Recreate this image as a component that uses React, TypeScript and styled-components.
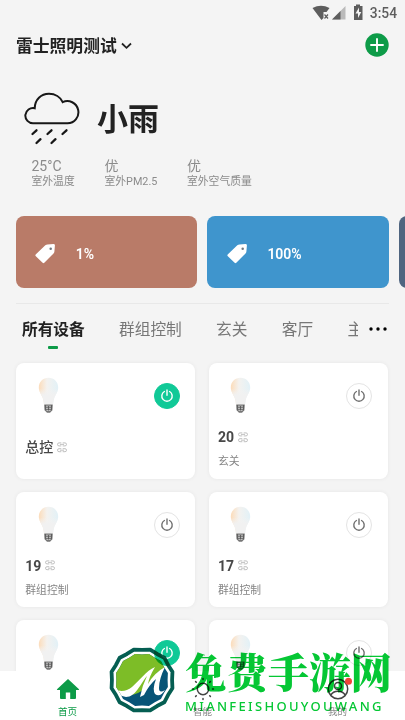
import React from "react";
import styled, { createGlobalStyle } from "styled-components";

const Global = createGlobalStyle`
  * { box-sizing: border-box; }
  body { margin: 0; background: #f4f4f4; }
`;

const Screen = styled.div`
  position: relative;
  width: 405px;
  height: 720px;
  overflow: hidden;
  display: flex;
  flex-direction: column;
  background: #f4f4f4;
  color: #222;
  font-family: Roboto, "Noto Sans CJK SC", sans-serif;
`;

const StatusBar = styled.div`
  height: 24px;
  flex: none;
  display: flex;
  justify-content: flex-end;
  align-items: center;
  padding: 1px 8px 0 0;
  color: #5d5d5d;
  font-size: 13.8px;
  font-weight: 500;
  line-height: 24px;
`;
const StatusIcons = styled.svg`
  width: 52px;
  height: 18px;
  margin: -2px 6px 0 0;
`;

const Header = styled.header`
  height: 42px;
  flex: none;
  display: flex;
  align-items: center;
  justify-content: space-between;
  padding: 0 16px;
`;
const HomeName = styled.div`
  display: flex;
  align-items: center;
  gap: 4px;
  padding-top: 1px;
  font-size: 16.8px;
  font-weight: 700;
  line-height: 24px;
`;

const Weather = styled.section`
  height: 93px;
  flex: none;
  display: flex;
  padding: 25px 0 0 24px;
`;
const WeatherName = styled.div`
  font-size: 31px;
  font-weight: 700;
  line-height: 36px;
  margin: 11px 0 0 17px;
`;

const Readings = styled.section`
  height: 57px;
  flex: none;
  display: flex;
  padding-left: 31.5px;
`;
const Reading = styled.div<{ $w: number }>`
  width: ${(p) => p.$w}px;
  color: #8b8b8b;
  font-size: 10.8px;
  line-height: 16px;
  white-space: nowrap;
`;
const ReadingValue = styled.div`
  font-size: 14px;
  line-height: 15px;
`;

const Scenes = styled.section`
  height: 72px;
  flex: none;
  display: flex;
  gap: 10px;
  padding-left: 15.7px;
  overflow: hidden;
`;
const Scene = styled.div<{ $color: string }>`
  width: 181.7px;
  flex: none;
  display: flex;
  align-items: center;
  gap: 19.5px;
  padding: 4px 0 0 19.5px;
  border-radius: 8px;
  background: ${(p) => p.$color};
  color: #fff;
  font-size: 14px;
  font-weight: 600;
`;

const Divider = styled.div`
  height: 1px;
  flex: none;
  margin: 15px 16px 0;
  background: #e8e8e8;
`;

const TabBar = styled.nav`
  height: 59px;
  flex: none;
  display: flex;
  padding: 13px 18px 0 22px;
`;
const Tabs = styled.div`
  display: flex;
  width: 336px;
  overflow: hidden;
`;
const Tab = styled.div<{ $active?: boolean }>`
  flex: none;
  display: flex;
  flex-direction: column;
  align-items: center;
  margin-right: 34.3px;
  height: 36px;
  font-size: 15.7px;
  line-height: 25px;
  font-weight: ${(p) => (p.$active ? 700 : 400)};
  color: ${(p) => (p.$active ? "#222" : "#777")};
  &::after {
    content: "";
    width: 10px;
    height: 3px;
    margin-top: 4px;
    border-radius: 1px;
    background: ${(p) => (p.$active ? "#0d9b48" : "transparent")};
  }
`;
const Dots = styled.svg`
  width: 18px;
  height: 4px;
  margin: 10px 0 0 10.5px;
`;

const Devices = styled.section`
  display: grid;
  grid-template-columns: 179px 179px;
  grid-auto-rows: 115.6px;
  gap: 13px 13.7px;
  padding-left: 16.3px;
`;
const Card = styled.article`
  display: flex;
  flex-direction: column;
  padding: 14px 15.6px 0 9px;
  border-radius: 8px;
  background: #fff;
  box-shadow: 0 0 4px rgba(0, 0, 0, 0.06);
`;
const CardTop = styled.div`
  display: flex;
  justify-content: space-between;
  align-items: flex-start;
  height: 50px;
  padding-left: 11.5px;
`;
const Power = styled.div<{ $on?: boolean }>`
  width: 26px;
  height: 26px;
  margin-top: 6px;
  display: grid;
  place-items: center;
  border-radius: 50%;
  color: ${(p) => (p.$on ? "#fff" : "#707070")};
  background: ${(p) => (p.$on ? "#10c997" : "#fff")};
  border: 1px solid ${(p) => (p.$on ? "#10c997" : "#e4e4e4")};
`;
const DeviceName = styled.div<{ $single?: boolean }>`
  display: flex;
  align-items: center;
  gap: 4px;
  margin-top: ${(p) => (p.$single ? 10 : 0)}px;
  color: #484848;
  font-size: 14px;
  font-weight: ${(p) => (p.$single ? 500 : 700)};
  line-height: 20px;
`;
const Room = styled.div`
  margin-top: 6px;
  color: #858585;
  font-size: 10.8px;
  line-height: 18px;
`;

const BottomNav = styled.nav`
  position: absolute;
  left: 0;
  right: 0;
  bottom: 0;
  height: 49px;
  display: grid;
  grid-template-columns: repeat(3, 1fr);
  background: #fff;
`;
const NavItem = styled.div<{ $active?: boolean }>`
  display: flex;
  flex-direction: column;
  align-items: center;
  padding-top: 6px;
  color: ${(p) => (p.$active ? "#0d9b48" : "#888")};
  font-size: 9.6px;
  line-height: 14px;
  svg { margin-bottom: 4px; }
`;

const Watermark = styled.div`
  position: absolute;
  left: 108px;
  bottom: 5px;
  display: flex;
  align-items: flex-start;
  gap: 9px;
  mix-blend-mode: multiply;
`;
const SiteText = styled.div`
  width: 210px;
  color: #05c734;
  white-space: nowrap;
`;
const SiteName = styled.div`
  font-family: "Noto Serif CJK SC", "Noto Sans CJK SC", serif;
  font-size: 41.4px;
  font-weight: 900;
  line-height: 46px;
`;
const SitePinyin = styled.div`
  font-family: "Noto Sans", sans-serif;
  font-size: 13px;
  font-weight: 500;
  line-height: 14px;
  letter-spacing: 2.3px;
  margin-top: 6px;
`;

const CloudIcon = () => (
  <svg width="56" height="54" viewBox="24 91 56 54" fill="none" stroke="#171717" strokeWidth="2" strokeLinecap="round">
    <path d="M33.300 123.300A7.650 7.650 0 1 1 34.700 108.200C34.900 99.500 41 93.700 49 93.700c6 0 11.500 3.300 13.700 8.400A11.100 11.100 0 1 1 67.500 123.300Z" />
    <path d="m36.500 130.300-4 3.700M51.500 130.300l-4 3.700M66.500 130.300l-4 3.700M40.500 139.200l-4 3.800M55.500 139.200l-4 3.800" strokeWidth="2.300" />
  </svg>
);

const TagIcon = () => (
  <svg width="21" height="20" viewBox="0 0 21 20">
    <path d="M.7 10.500 10.300 1.300Q11.300.6 12.500.4L18.500 0Q20 0 19.900 1.400L19.400 7.500Q19.300 8.800 18.300 9.700L9.300 18.800Q8.500 19.500 7.600 18.700L.6 12Q0 11.300.7 10.500Z" fill="#fff" />
    <circle cx="15.700" cy="4.700" r="1.250" fill="#6f7880" />
  </svg>
);

const bulbShape =
  "M11.500 .8C6 .8 1.800 5 1.800 10.500c0 4.300 2.700 6.800 4 10.600 .7 2.100 .9 4.300 1.200 6.400h9c.3-2.100 .5-4.300 1.200-6.400 1.300-3.800 4-6.300 4-10.600C21.200 5 17 .8 11.500 .8Z";

const BulbIcon = ({ id }: { id: string }) => (
  <svg width="23" height="38" viewBox="0 0 23 38">
    <defs>
      <linearGradient id={id}>
        <stop offset="0" stopColor="#fcdcba" />
        <stop offset=".42" stopColor="#f4f2ef" />
        <stop offset="1" stopColor="#e2f1f7" />
      </linearGradient>
      <linearGradient id={id + "n"} x2="0" y2="1">
        <stop offset=".4" stopColor="#f3f3f3" stopOpacity="0" />
        <stop offset=".65" stopColor="#f1f1f1" />
      </linearGradient>
    </defs>
    <path d={bulbShape} fill={`url(#${id})`} />
    <path d={bulbShape} fill={`url(#${id}n)`} />
    <path d="M7.300 27.500h8.400l-.5 6-2.200 2.200h-3L7.800 33.500Z" fill="#777" />
    <path d="M9 29.200h5M9 31.400h5M9.500 33.500h4" stroke="#dedede" strokeWidth=".7" />
    <path d="M8.200 28v5M11.500 29v4.500M14.700 28v5" stroke="#505050" strokeWidth=".8" />
  </svg>
);

const PowerIcon = () => (
  <svg width="14" height="14" viewBox="0 0 14 14" fill="none" stroke="currentColor" strokeWidth="1.400" strokeLinecap="round">
    <path d="M7 1v5.200M4.400 2.500a5.200 5.200 0 1 0 5.200 0" />
  </svg>
);

const LinkIcon = () => (
  <svg width="10" height="11" viewBox="0 0 10 11" fill="none" stroke="#bababa" strokeWidth=".9">
    {[2.4, 8.2].map((y) => (
      <g key={y}>
        <path d={`M4.300 ${y - 1.5}H2A1.500 1.500 0 0 0 2 ${y + 1.5}H4.300M5.700 ${y - 1.5}H8A1.500 1.500 0 0 1 8 ${y + 1.5}H5.700`} />
        <path d={`M3 ${y}h4`} />
      </g>
    ))}
  </svg>
);

const outline = (r: number) =>
  Array.from({ length: 12 }, (_, i) => {
    const a = ((i * 30 + 15) * Math.PI) / 180;
    const b = ((i * 30 + 30) * Math.PI) / 180;
    const p = `${34 + r * Math.cos(a)} ${33 + r * Math.sin(a)}`;
    const q = `${34 + r * 0.955 * Math.cos(b)} ${33 + r * 0.955 * Math.sin(b)}`;
    return `${i ? "L" : "M"}${p}L${q}`;
  }).join("") + "Z";

const SiteLogo = () => (
  <svg width="68" height="68" viewBox="0 0 68 68">
    <defs>
      <clipPath id="emblem"><path d={outline(26.8)} /></clipPath>
    </defs>
    <path d={outline(31.5)} fill="#fff" stroke="#055e52" strokeWidth="3.800" strokeLinejoin="round" />
    <g clipPath="url(#emblem)">
      <path d="M0 0h68v68H0Z" fill="#075477" />
      <path d="M0 0H68L62 12Q57 23 50 25L38 40Q29 49 20 48Q12 48 0 41Z" fill="#7dbd27" />
      <path d="M5 41C10 45 18 45 24 40C32 33 38 24 47 20Q41 30 40 37Q46 26 57 20Q51 32 51 41Q51 47 57 43Q52 51 47 47Q44 42 48 32Q41 38 36 48L32 50Q34 39 39 29C32 37 28 50 18 50Q9 49 5 41Z" fill="#fff" />
    </g>
  </svg>
);

const devices = [
  { name: "总控", on: true },
  { name: "20", room: "玄关" },
  { name: "19", room: "群组控制" },
  { name: "17", room: "群组控制" },
  { name: "16", room: "群组控制", on: true },
  { name: "15", room: "群组控制" },
];

export default function App() {
  return (
    <Screen>
      <Global />
      <StatusBar>
        <StatusIcons viewBox="0 0 52 18">
          <path d="M.5 5Q9 .5 17.500 5l-3 4h-3v6l-2 2Z" fill="#5d5d5d" />
          <path d="m12.500 11.500 3.500 4m0-4-3.500 4" stroke="#5d5d5d" strokeWidth="1.200" />
          <path d="M20 16.500 33.500 3v13.500Z" fill="#bababa" />
          <path d="M20 16.500 28.500 8v8.500Z" fill="#5d5d5d" />
          <path d="M42 3h2V1.500h4V3h2.500v14H42Z" fill="#5d5d5d" />
          <path d="m47 4.500-3.500 6H46V15l3.300-6H47Z" fill="#f4f4f4" />
        </StatusIcons>
        3:54
      </StatusBar>
      <Header>
        <HomeName>
          雷士照明测试
          <svg width="11" height="8" viewBox="0 0 11 8" fill="none" stroke="#222" strokeWidth="1.800">
            <path d="m1 1.500 4.500 4.300L10 1.500" />
          </svg>
        </HomeName>
        <svg width="24" height="24" viewBox="0 0 24 24">
          <circle cx="12" cy="12" r="11.700" fill="#0d9b48" />
          <path d="M12 6v12M6 12h12" stroke="#fff" strokeWidth="1.900" strokeLinecap="round" />
        </svg>
      </Header>
      <Weather>
        <CloudIcon />
        <WeatherName>小雨</WeatherName>
      </Weather>
      <Readings>
        <Reading $w={73}><ReadingValue>25°C</ReadingValue>室外温度</Reading>
        <Reading $w={82.5}><ReadingValue>优</ReadingValue>室外PM2.5</Reading>
        <Reading $w={80}><ReadingValue>优</ReadingValue>室外空气质量</Reading>
      </Readings>
      <Scenes>
        <Scene $color="#b97b68"><TagIcon />1%</Scene>
        <Scene $color="#3f95cd"><TagIcon />100%</Scene>
        <Scene $color="#4f6580" />
      </Scenes>
      <Divider />
      <TabBar>
        <Tabs>
          <Tab $active>所有设备</Tab>
          <Tab>群组控制</Tab>
          <Tab>玄关</Tab>
          <Tab>客厅</Tab>
          <Tab>主卧</Tab>
        </Tabs>
        <Dots viewBox="0 0 18 4">
          <circle cx="2" cy="2" r="1.700" /><circle cx="9" cy="2" r="1.700" /><circle cx="16" cy="2" r="1.700" />
        </Dots>
      </TabBar>
      <Devices>
        {devices.map((d, i) => (
          <Card key={d.name}>
            <CardTop>
              <BulbIcon id={`bulb${i}`} />
              <Power $on={d.on}><PowerIcon /></Power>
            </CardTop>
            {i < 4 && (
              <>
                <DeviceName $single={!d.room}>{d.name}<LinkIcon /></DeviceName>
                {d.room && <Room>{d.room}</Room>}
              </>
            )}
          </Card>
        ))}
      </Devices>
      <BottomNav>
        <NavItem $active>
          <svg width="24" height="24" viewBox="0 0 24 24" fill="currentColor">
            <path d="M12 2 1 12.200q-.5.800.5.800H4v8q0 1 1 1h4.800v-6.500h4.400V22H19q1 0 1-1v-8h2.500q1 0 .5-.8Z" />
          </svg>
          首页
        </NavItem>
        <NavItem>
          <svg width="24" height="24" viewBox="0 0 24 24" fill="none" stroke="#444" strokeWidth="1.500" strokeLinecap="round">
            <circle cx="12" cy="12" r="5.700" />
            <path d="M12 1.500v1M12 21.500v1M1.500 12h1M21.500 12h1M4.600 4.600l.7.7M18.700 18.700l.7.700M4.600 19.400l.7-.7M18.700 5.300l.7-.7" />
          </svg>
          智能
        </NavItem>
        <NavItem>
          <svg width="28" height="24" viewBox="-2 0 28 24" fill="none" stroke="#444" strokeWidth="1.500">
            <circle cx="12" cy="12" r="9.700" />
            <circle cx="12" cy="9" r="3.500" />
            <path d="M4.800 18.200q2-4 7.200-4t7.200 4" />
            <circle cx="22.500" cy="4.300" r="3.500" fill="#f04438" stroke="none" />
          </svg>
          我的
        </NavItem>
      </BottomNav>
      <Watermark>
        <SiteLogo />
        <SiteText>
          <SiteName>免费手游网</SiteName>
          <SitePinyin>MIANFEISHOUYOUWANG</SitePinyin>
        </SiteText>
      </Watermark>
    </Screen>
  );
}
